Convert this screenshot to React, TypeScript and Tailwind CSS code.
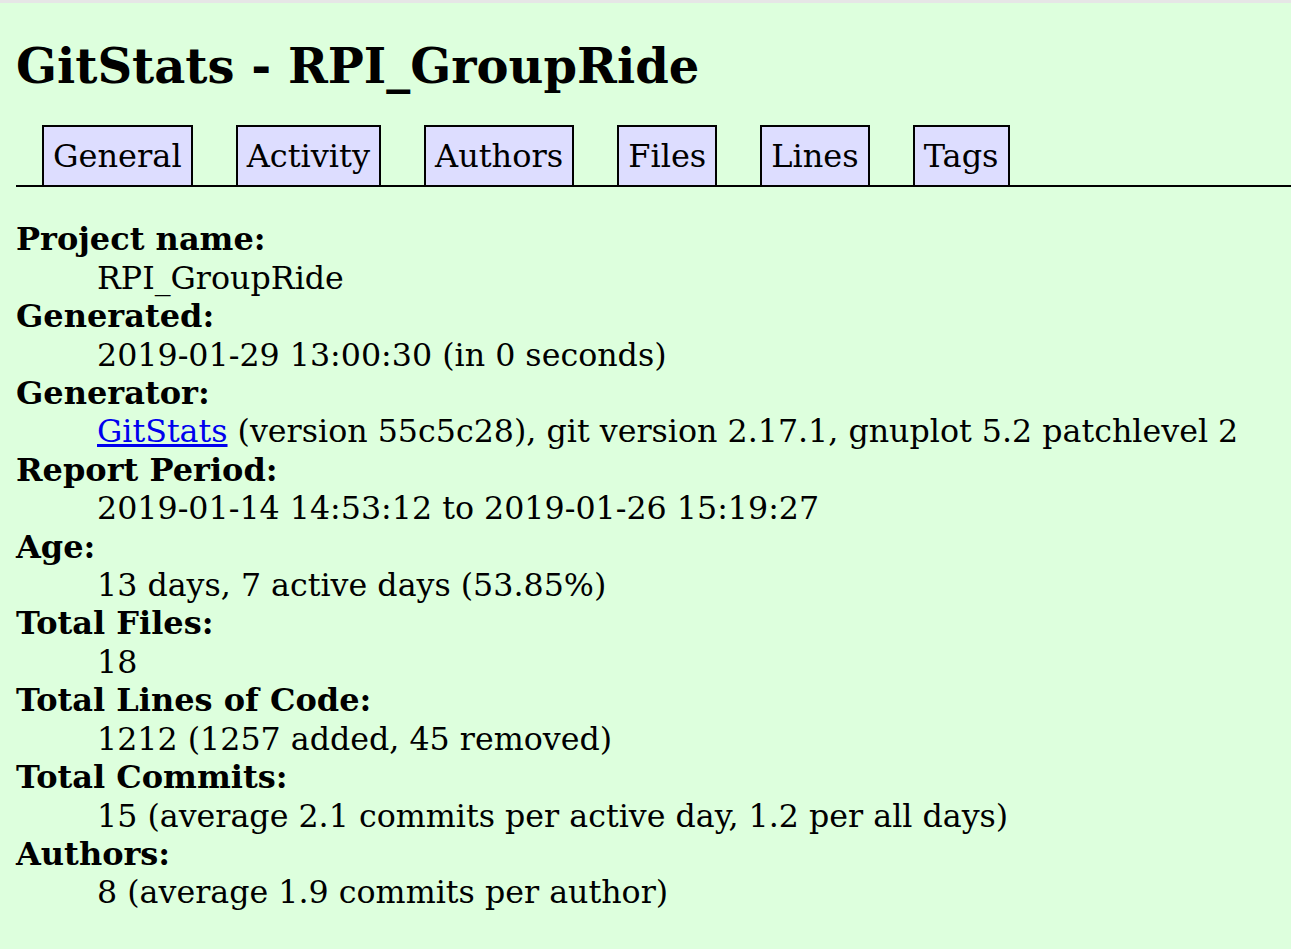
const tabs = ['General', 'Activity', 'Authors', 'Files', 'Lines', 'Tags']

const rows: { label: string; value: React.ReactNode }[] = [
  { label: 'Project name:', value: 'RPI_GroupRide' },
  { label: 'Generated:', value: '2019-01-29 13:00:30 (in 0 seconds)' },
  {
    label: 'Generator:',
    value: (
      <>
        <a href="#" className="text-[#0000ee] underline">GitStats</a> (version 55c5c28), git version 2.17.1, gnuplot 5.2 patchlevel 2
      </>
    ),
  },
  { label: 'Report Period:', value: '2019-01-14 14:53:12 to 2019-01-26 15:19:27' },
  { label: 'Age:', value: '13 days, 7 active days (53.85%)' },
  { label: 'Total Files:', value: '18' },
  { label: 'Total Lines of Code:', value: '1212 (1257 added, 45 removed)' },
  { label: 'Total Commits:', value: '15 (average 2.1 commits per active day, 1.2 per all days)' },
  { label: 'Authors:', value: '8 (average 1.9 commits per author)' },
]

export default function App() {
  return (
    <div className="min-h-[949px] bg-[#ddffdd] text-black font-['DejaVu_Serif',serif] text-[32px] leading-[38.4px]">
      <div className="h-[3px] bg-[#e6e6e6]" />
      <div className="pl-4">
        <h1 className="pt-[34px] text-[48px] font-bold leading-[58px]">GitStats - RPI_GroupRide</h1>

        {/* nav tabs */}
        <div className="mt-[30px] border-b-2 border-black">
          <ul className="flex gap-[43px] pl-[26px]">
            {tabs.map((t) => (
              <li key={t} className="-mb-[2px] border-2 border-black bg-[#ddddff] px-[9px] py-[10px]">
                {t}
              </li>
            ))}
          </ul>
        </div>

        <dl className="mt-[33px]">
          {rows.map((r) => (
            <div key={r.label}>
              <dt className="font-bold">{r.label}</dt>
              <dd className="ml-[81px] text-[31.7px]">{r.value}</dd>
            </div>
          ))}
        </dl>
      </div>
    </div>
  )
}
